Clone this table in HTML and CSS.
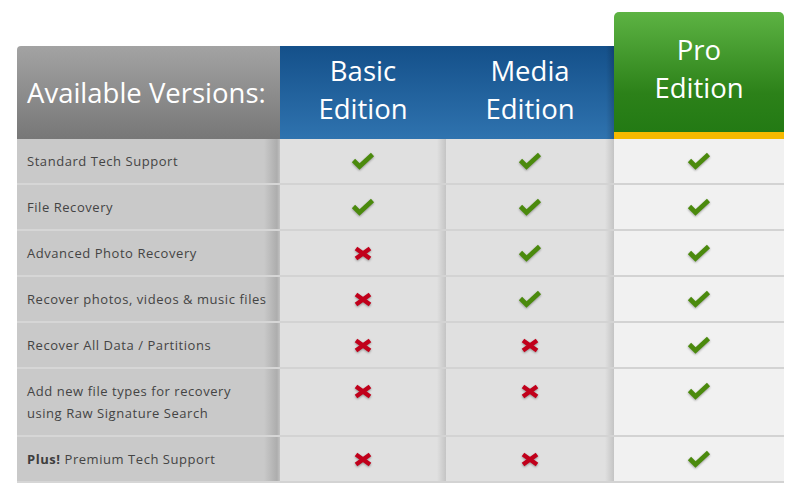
FILE: index.html
```html
<!DOCTYPE html>
<html>
<head>
<meta charset="utf-8">
<link rel="stylesheet" href="styles.css">
</head>
<body>
<svg width="0" height="0" class="defs">
  <defs>
    <symbol id="ok" viewBox="0 0 24 18"><path d="M2.5 8.5 L8.5 14.5 L21.5 2.5" fill="none" stroke="#4b8a0d" stroke-width="4.6" stroke-linejoin="miter"/></symbol>
    <symbol id="no" viewBox="0 0 20 15"><path d="M3 2.5 L17 12.5 M17 2.5 L3 12.5" fill="none" stroke="#c1001b" stroke-width="4.4"/></symbol>
  </defs>
</svg>
<div class="table">
  <div class="hcell h-label">Available Versions:</div>
  <div class="hcell h-basic">Basic<br>Edition</div>
  <div class="hcell h-media">Media<br>Edition</div>
  <div class="hcell h-pro">Pro<br>Edition</div>

  <div class="cell label">Standard Tech Support</div>
  <div class="cell c-basic"><svg class="ic ok"><use href="#ok"/></svg></div>
  <div class="cell c-media"><svg class="ic ok"><use href="#ok"/></svg></div>
  <div class="cell c-pro"><svg class="ic ok"><use href="#ok"/></svg></div>

  <div class="cell label">File Recovery</div>
  <div class="cell c-basic"><svg class="ic ok"><use href="#ok"/></svg></div>
  <div class="cell c-media"><svg class="ic ok"><use href="#ok"/></svg></div>
  <div class="cell c-pro"><svg class="ic ok"><use href="#ok"/></svg></div>

  <div class="cell label">Advanced Photo Recovery</div>
  <div class="cell c-basic"><svg class="ic no"><use href="#no"/></svg></div>
  <div class="cell c-media"><svg class="ic ok"><use href="#ok"/></svg></div>
  <div class="cell c-pro"><svg class="ic ok"><use href="#ok"/></svg></div>

  <div class="cell label">Recover photos, videos &amp; music files</div>
  <div class="cell c-basic"><svg class="ic no"><use href="#no"/></svg></div>
  <div class="cell c-media"><svg class="ic ok"><use href="#ok"/></svg></div>
  <div class="cell c-pro"><svg class="ic ok"><use href="#ok"/></svg></div>

  <div class="cell label">Recover All Data / Partitions</div>
  <div class="cell c-basic"><svg class="ic no"><use href="#no"/></svg></div>
  <div class="cell c-media"><svg class="ic no"><use href="#no"/></svg></div>
  <div class="cell c-pro"><svg class="ic ok"><use href="#ok"/></svg></div>

  <div class="cell label">Add new file types for recovery<br>using Raw Signature Search</div>
  <div class="cell c-basic"><svg class="ic no"><use href="#no"/></svg></div>
  <div class="cell c-media"><svg class="ic no"><use href="#no"/></svg></div>
  <div class="cell c-pro"><svg class="ic ok"><use href="#ok"/></svg></div>

  <div class="cell label"><b>Plus!</b> Premium Tech Support</div>
  <div class="cell c-basic"><svg class="ic no"><use href="#no"/></svg></div>
  <div class="cell c-media"><svg class="ic no"><use href="#no"/></svg></div>
  <div class="cell c-pro"><svg class="ic ok"><use href="#ok"/></svg></div>
</div>
</body>
</html>
```
FILE: styles.css
```css
html, body {
  margin: 0;
  padding: 0;
  background: #ffffff;
}
.defs {
  position: absolute;
  width: 0;
  height: 0;
}
.table {
  margin: 12px 0 0 17px;
  width: 767px;
  display: grid;
  grid-template-columns: 263px 166px 168px 170px;
  font-family: "Open Sans", "DejaVu Sans", sans-serif;
}
.hcell {
  align-self: end;
  height: 93px;
  display: flex;
  align-items: center;
  justify-content: center;
  text-align: center;
  color: #ffffff;
  font-size: 27.5px;
  line-height: 38px;
  box-sizing: border-box;
}
.h-label {
  background: linear-gradient(#a3a3a3, #777777);
  border-top-left-radius: 4px;
  justify-content: flex-start;
  padding-left: 10px;
  padding-top: 1px;
}
.h-basic {
  background: linear-gradient(#14508a, #2f73af);
  padding-bottom: 5px;
}
.h-media {
  background: linear-gradient(to left, rgba(0,0,0,0.18), rgba(0,0,0,0) 8px), linear-gradient(#14508a, #2f73af);
  padding-bottom: 5px;
}
.h-pro {
  height: 127px;
  background: linear-gradient(#5db343, #2c8119 68%, #237a14);
  border-bottom: 7px solid #f6b900;
  border-radius: 5px 5px 0 0;
  padding-top: 0;
  padding-bottom: 6px;
}
.cell {
  padding: 11px 10px;
  line-height: 22px;
  border-bottom: 2px solid #d3d3d3;
  display: flex;
  justify-content: center;
  align-items: flex-start;
}
.label {
  display: block;
  font-size: 13px;
  letter-spacing: 0.55px;
  color: #444444;
  background: linear-gradient(to left, #c3c3c3 0, #adadad 3px, #c9c9c9 16px);
  border-bottom-color: #d6d6d6;
}
.label b {
  font-weight: 700;
  color: #3e3e3e;
}
.c-basic, .c-media {
  background: linear-gradient(to left, #c4c4c4 0, #e0e0e0 9px);
}
.c-pro {
  background: #f1f1f1;
}
.ic {
  filter: drop-shadow(0 1px 1px rgba(0,0,0,0.35));
}
.ok {
  width: 24px;
  height: 18px;
  margin-top: 2px;
}
.no {
  width: 20px;
  height: 15px;
  margin-top: 4px;
}
```
